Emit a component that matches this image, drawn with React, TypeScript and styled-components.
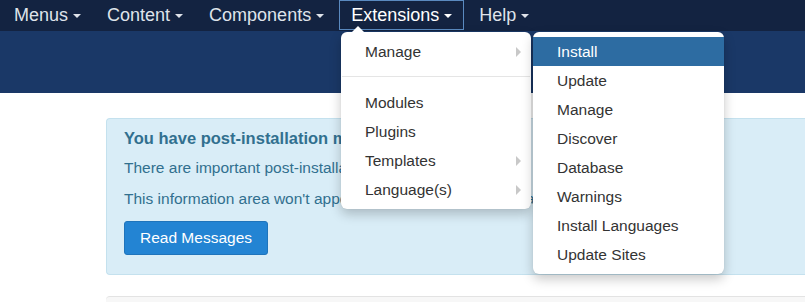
import styled, { createGlobalStyle } from "styled-components";

const Global = createGlobalStyle`
  html, body { margin: 0; padding: 0; background: #fff; }
  body { font-family: "Liberation Sans", Arial, sans-serif; overflow: hidden; }
`;

const Page = styled.div`
  position: relative;
  width: 805px;
  height: 302px;
  overflow: hidden;
`;

const NavBar = styled.nav`
  height: 31px;
  background: #132341;
  display: flex;
  align-items: stretch;
  padding-left: 1px;
`;

const NavItem = styled.div<{ active?: boolean }>`
  position: relative;
  display: flex;
  align-items: center;
  gap: 5px;
  padding: 0 ${({ active }) => (active ? "11px" : "12px")};
  margin: ${({ active }) => (active ? "0 2px 0 2px" : "0")};
  height: 30px;
  font-size: 18px;
  color: ${({ active }) => (active ? "#fff" : "#dfe3ea")};
  border: 1px solid ${({ active }) => (active ? "#5a8ac0" : "transparent")};
  box-sizing: border-box;
`;

const Caret = styled.span`
  width: 0;
  height: 0;
  border-left: 4px solid transparent;
  border-right: 4px solid transparent;
  border-top: 4px solid currentColor;
  margin-top: 1px;
`;

const Header = styled.div`
  height: 62px;
  background: #1a3867;
`;

const Body = styled.div`
  padding: 25px 0 0 106px;
`;

const Alert = styled.div`
  background: #d9edf7;
  border: 1px solid #c4e1ee;
  border-right: none;
  border-radius: 4px 0 0 4px;
  padding: 10px 18px 20px 17px;
  color: #31708f;
  font-size: 15.5px;
  height: 157px;
  box-sizing: border-box;
`;

const AlertTitle = styled.div`
  font-weight: bold;
  font-size: 16.5px;
  margin-bottom: 10px;
`;

const AlertLine = styled.p`
  margin: 0 0 11px;
  line-height: 20px;
  white-space: nowrap;
`;

const Button = styled.button`
  font-family: inherit;
  font-size: 15.5px;
  color: #fff;
  background: #2384d3;
  border: 1px solid #1f74bb;
  border-radius: 3px;
  height: 34px;
  padding: 0 15px;
  margin-top: 1px;
`;

const NextPanel = styled.div`
  margin-top: 21px;
  height: 20px;
  border-top: 1px solid #e3e3e3;
  background: #f7f7f7;
  border-radius: 4px 0 0 0;
`;

const Menu = styled.div<{ left: number; top: number; width: number }>`
  position: absolute;
  left: ${({ left }) => left}px;
  top: ${({ top }) => top}px;
  width: ${({ width }) => width}px;
  background: #fff;
  border-radius: 6px;
  box-shadow: 0 5px 12px rgba(0, 0, 0, 0.22), 0 0 1px rgba(0, 0, 0, 0.15);
  padding: 5px 0 5px;
  z-index: 5;
`;

const MenuPointer = styled.span`
  position: absolute;
  top: -6px;
  left: 11px;
  width: 0;
  height: 0;
  border-left: 6px solid transparent;
  border-right: 6px solid transparent;
  border-bottom: 6px solid #fff;
`;

const MenuItem = styled.div<{ active?: boolean }>`
  display: flex;
  align-items: center;
  justify-content: space-between;
  height: 29px;
  padding: 0 10px 0 24px;
  font-size: 15.5px;
  color: ${({ active }) => (active ? "#fff" : "#333")};
  background: ${({ active }) => (active ? "#2d6ca2" : "transparent")};
`;

const SubArrow = styled.span`
  width: 0;
  height: 0;
  border-top: 5px solid transparent;
  border-bottom: 5px solid transparent;
  border-left: 5px solid #c8c8c8;
`;

const Divider = styled.div`
  height: 1px;
  background: #e5e5e5;
  margin: 10px 1px 11px;
`;

const nav = ["Menus", "Content", "Components", "Extensions", "Help"];
const sub = [
  "Install",
  "Update",
  "Manage",
  "Discover",
  "Database",
  "Warnings",
  "Install Languages",
  "Update Sites",
];

export default function App() {
  return (
    <Page>
      <Global />
      <NavBar>
        {nav.map((n) => (
          <NavItem key={n} active={n === "Extensions"}>
            {n}
            <Caret />
          </NavItem>
        ))}
      </NavBar>
      <Header />
      <Body>
        <Alert>
          <AlertTitle>You have post-installation messages</AlertTitle>
          <AlertLine>
            There are important post-installation messages that require your
            attention.
          </AlertLine>
          <AlertLine>
            This information area won't appear when you have hidden all the
            messages.
          </AlertLine>
          <Button type="button">Read Messages</Button>
        </Alert>
        <NextPanel />
      </Body>

      <Menu left={341} top={32} width={190}>
        <MenuPointer />
        <MenuItem>
          Manage
          <SubArrow />
        </MenuItem>
        <Divider />
        <MenuItem>Modules</MenuItem>
        <MenuItem>Plugins</MenuItem>
        <MenuItem>
          Templates
          <SubArrow />
        </MenuItem>
        <MenuItem>
          Language(s)
          <SubArrow />
        </MenuItem>
      </Menu>

      <Menu left={533} top={32} width={191}>
        {sub.map((s) => (
          <MenuItem key={s} active={s === "Install"}>
            {s}
          </MenuItem>
        ))}
      </Menu>
    </Page>
  );
}
